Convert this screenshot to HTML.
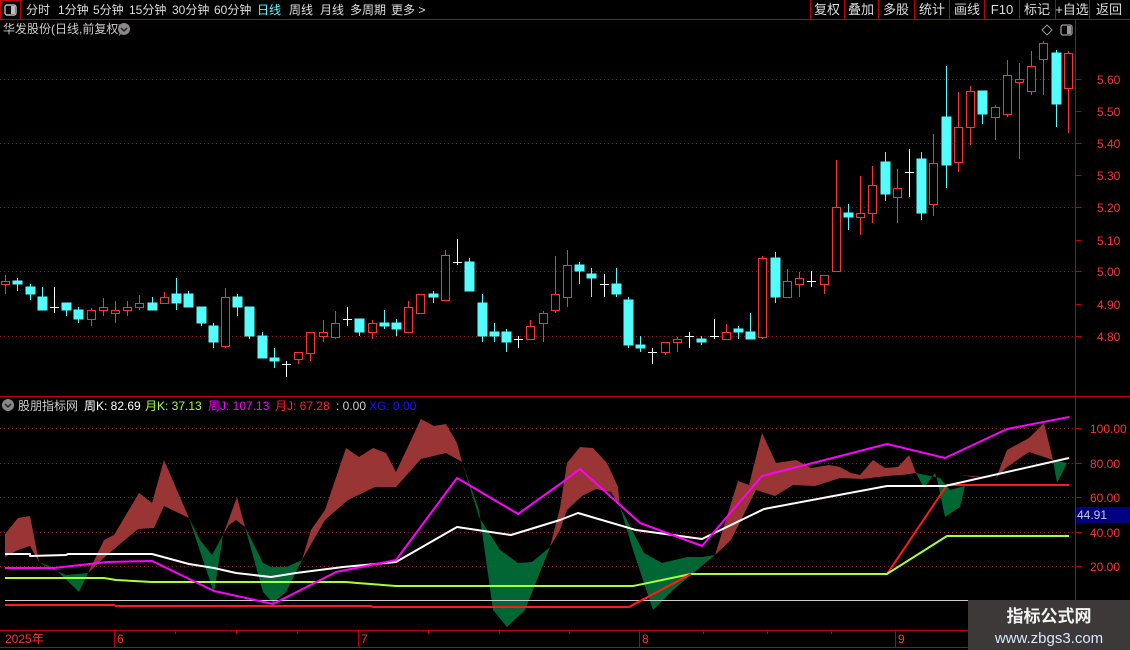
<!DOCTYPE html>
<html><head><meta charset="utf-8"><style>
html,body{margin:0;padding:0;background:#000;width:1130px;height:650px;overflow:hidden;font-family:"Liberation Sans","Noto Sans CJK SC",sans-serif}
svg{position:absolute;left:0;top:0}
</style></head><body>
<svg width="1130" height="650" viewBox="0 0 1130 650" xmlns="http://www.w3.org/2000/svg" font-family="Liberation Sans, Noto Sans CJK SC, sans-serif">
<rect width="1130" height="650" fill="#000"/>
<!-- top bar -->
<line x1="0" y1="19.5" x2="1130" y2="19.5" stroke="#c00000"/>
<rect x="0.5" y="0.5" width="20" height="19" fill="none" stroke="#c00000"/>
<rect x="5" y="5" width="11" height="10" rx="2" fill="none" stroke="#bbb" stroke-width="1.4"/>
<rect x="11" y="6" width="4" height="8" fill="#bbb"/>
<g font-size="12" fill="#ddd">
<text x="26" y="14">分时</text><text x="58" y="14">1分钟</text><text x="93" y="14">5分钟</text><text x="129" y="14">15分钟</text><text x="172" y="14">30分钟</text><text x="214" y="14">60分钟</text><text x="257" y="14" fill="#54fcfc">日线</text><text x="289" y="14">周线</text><text x="320" y="14">月线</text><text x="350" y="14">多周期</text><text x="391" y="14">更多 &gt;</text>
</g>
<g stroke="#c00000"><line x1="810.5" y1="0" x2="810.5" y2="19"/><line x1="844.5" y1="0" x2="844.5" y2="19"/><line x1="878.5" y1="0" x2="878.5" y2="19"/><line x1="914.5" y1="0" x2="914.5" y2="19"/><line x1="949.5" y1="0" x2="949.5" y2="19"/><line x1="984.5" y1="0" x2="984.5" y2="19"/><line x1="1019.5" y1="0" x2="1019.5" y2="19"/><line x1="1055.5" y1="0" x2="1055.5" y2="19"/><line x1="1089.5" y1="0" x2="1089.5" y2="19"/></g>
<g font-size="13" fill="#ddd" text-anchor="middle">
<text x="827" y="14">复权</text><text x="861" y="14">叠加</text><text x="896" y="14">多股</text><text x="932" y="14">统计</text><text x="967" y="14">画线</text><text x="1002" y="14">F10</text><text x="1037" y="14">标记</text><text x="1072" y="14">+自选</text><text x="1109" y="14">返回</text>
</g>
<!-- title -->
<text x="3" y="33" font-size="12" fill="#ccc">华发股份(日线,前复权)</text>
<circle cx="124" cy="29" r="6" fill="#888"/><path d="M121 28 L124 31 L127 28" stroke="#222" stroke-width="1.5" fill="none"/>
<path d="M1047 25 L1052 30 L1047 35 L1042 30 Z" fill="none" stroke="#999"/>
<rect x="1061" y="25" width="11" height="10" rx="2" fill="none" stroke="#999" stroke-width="1.3"/><rect x="1067" y="26" width="4" height="8" fill="#999"/>
<!-- axis lines -->
<line x1="1075.5" y1="20" x2="1075.5" y2="630" stroke="#c00000"/>
<line x1="0" y1="396.5" x2="1130" y2="396.5" stroke="#c00000"/>
<!-- price grid -->
<g stroke="#8a1a1a" stroke-dasharray="1,3"><line x1="0" y1="79.5" x2="1075" y2="79.5"/><line x1="0" y1="143.5" x2="1075" y2="143.5"/><line x1="0" y1="207.5" x2="1075" y2="207.5"/><line x1="0" y1="271.5" x2="1075" y2="271.5"/><line x1="0" y1="336.5" x2="1075" y2="336.5"/></g>
<g stroke="#c00000"><line x1="1075" y1="79.5" x2="1081" y2="79.5"/><line x1="1075" y1="111.5" x2="1081" y2="111.5"/><line x1="1075" y1="143.5" x2="1081" y2="143.5"/><line x1="1075" y1="175.5" x2="1081" y2="175.5"/><line x1="1075" y1="207.5" x2="1081" y2="207.5"/><line x1="1075" y1="240.5" x2="1081" y2="240.5"/><line x1="1075" y1="271.5" x2="1081" y2="271.5"/><line x1="1075" y1="304.5" x2="1081" y2="304.5"/><line x1="1075" y1="336.5" x2="1081" y2="336.5"/></g>
<g font-size="12" fill="#ff3232"><text x="1097" y="84">5.60</text><text x="1097" y="116">5.50</text><text x="1097" y="148">5.40</text><text x="1097" y="180">5.30</text><text x="1097" y="212">5.20</text><text x="1097" y="245">5.10</text><text x="1097" y="276">5.00</text><text x="1097" y="309">4.90</text><text x="1097" y="341">4.80</text></g>
<g stroke-width="1" shape-rendering="crispEdges">
<g stroke="#ff3232" fill="#000">
<line x1="5.5" y1="275" x2="5.5" y2="294"/><rect x="1.5" y="281.5" width="8" height="3"/>
<line x1="91.5" y1="308" x2="91.5" y2="326"/><rect x="87.5" y="310.5" width="8" height="9"/>
<line x1="103.5" y1="298" x2="103.5" y2="316"/><rect x="99.5" y="307.5" width="8" height="3"/>
<line x1="115.5" y1="301" x2="115.5" y2="323"/><rect x="111.5" y="310.5" width="8" height="3"/>
<line x1="127.5" y1="301" x2="127.5" y2="316"/><rect x="123.5" y="307.5" width="8" height="3"/>
<line x1="139.5" y1="295" x2="139.5" y2="310"/><rect x="135.5" y="303.5" width="8" height="4"/>
<line x1="164.5" y1="292" x2="164.5" y2="303"/><rect x="160.5" y="297.5" width="8" height="6"/>
<line x1="225.5" y1="288" x2="225.5" y2="348"/><rect x="221.5" y="297.5" width="8" height="49"/>
<line x1="298.5" y1="352" x2="298.5" y2="364"/><rect x="294.5" y="352.5" width="8" height="7"/>
<line x1="310.5" y1="332" x2="310.5" y2="361"/><rect x="306.5" y="332.5" width="8" height="21"/>
<line x1="323.5" y1="320" x2="323.5" y2="342"/><rect x="319.5" y="332.5" width="8" height="4"/>
<line x1="335.5" y1="311" x2="335.5" y2="339"/><rect x="331.5" y="323.5" width="8" height="14"/>
<line x1="372.5" y1="320" x2="372.5" y2="339"/><rect x="368.5" y="323.5" width="8" height="9"/>
<line x1="408.5" y1="301" x2="408.5" y2="332"/><rect x="404.5" y="307.5" width="8" height="25"/>
<rect x="416.5" y="294.5" width="8" height="19"/>
<line x1="445.5" y1="250" x2="445.5" y2="300"/><rect x="441.5" y="255.5" width="8" height="45"/>
<line x1="530.5" y1="320" x2="530.5" y2="339"/><rect x="526.5" y="326.5" width="8" height="13"/>
<line x1="543.5" y1="311" x2="543.5" y2="342"/><rect x="539.5" y="313.5" width="8" height="10"/>
<line x1="555.5" y1="256" x2="555.5" y2="313"/><rect x="551.5" y="294.5" width="8" height="16"/>
<line x1="567.5" y1="250" x2="567.5" y2="307"/><rect x="563.5" y="265.5" width="8" height="32"/>
<line x1="665.5" y1="342" x2="665.5" y2="355"/><rect x="661.5" y="342.5" width="8" height="10"/>
<line x1="677.5" y1="337" x2="677.5" y2="352"/><rect x="673.5" y="339.5" width="8" height="3"/>
<line x1="726.5" y1="324" x2="726.5" y2="339"/><rect x="722.5" y="332.5" width="8" height="7"/>
<line x1="762.5" y1="256" x2="762.5" y2="339"/><rect x="758.5" y="258.5" width="8" height="79"/>
<line x1="787.5" y1="269" x2="787.5" y2="297"/><rect x="783.5" y="281.5" width="8" height="16"/>
<line x1="799.5" y1="272" x2="799.5" y2="297"/><rect x="795.5" y="278.5" width="8" height="6"/>
<line x1="824.5" y1="275" x2="824.5" y2="294"/><rect x="820.5" y="275.5" width="8" height="9"/>
<line x1="836.5" y1="160" x2="836.5" y2="271"/><rect x="832.5" y="207.5" width="8" height="64"/>
<line x1="860.5" y1="176" x2="860.5" y2="235"/><rect x="856.5" y="213.5" width="8" height="4"/>
<line x1="872.5" y1="166" x2="872.5" y2="223"/><rect x="868.5" y="185.5" width="8" height="28"/>
<line x1="897.5" y1="169" x2="897.5" y2="223"/><rect x="893.5" y="188.5" width="8" height="9"/>
<line x1="933.5" y1="134" x2="933.5" y2="216"/><rect x="929.5" y="163.5" width="8" height="41"/>
<line x1="958.5" y1="92" x2="958.5" y2="172"/><rect x="954.5" y="127.5" width="8" height="35"/>
<line x1="970.5" y1="86" x2="970.5" y2="145"/><rect x="966.5" y="91.5" width="8" height="36"/>
<line x1="995.5" y1="105" x2="995.5" y2="140"/><rect x="991.5" y="107.5" width="8" height="10"/>
<line x1="1007.5" y1="60" x2="1007.5" y2="117"/><rect x="1003.5" y="75.5" width="8" height="39"/>
<line x1="1019.5" y1="63" x2="1019.5" y2="159"/><rect x="1015.5" y="79.5" width="8" height="3"/>
<line x1="1031.5" y1="51" x2="1031.5" y2="95"/><rect x="1027.5" y="66.5" width="8" height="25"/>
<line x1="1043.5" y1="41" x2="1043.5" y2="95"/><rect x="1039.5" y="43.5" width="8" height="16"/>
<line x1="1068.5" y1="51" x2="1068.5" y2="133"/><rect x="1064.5" y="53.5" width="8" height="35"/>
</g>
<g stroke="#54fcfc" fill="#54fcfc">
<line x1="17.5" y1="278" x2="17.5" y2="291"/><rect x="13" y="281" width="9" height="3"/>
<line x1="30.5" y1="284" x2="30.5" y2="300"/><rect x="26" y="287" width="9" height="7"/>
<line x1="42.5" y1="287" x2="42.5" y2="310"/><rect x="38" y="297" width="9" height="13"/>
<line x1="66.5" y1="303" x2="66.5" y2="316"/><rect x="62" y="303" width="9" height="7"/>
<line x1="78.5" y1="307" x2="78.5" y2="323"/><rect x="74" y="310" width="9" height="9"/>
<line x1="152.5" y1="297" x2="152.5" y2="310"/><rect x="148" y="303" width="9" height="7"/>
<line x1="176.5" y1="278" x2="176.5" y2="310"/><rect x="172" y="294" width="9" height="9"/>
<line x1="188.5" y1="291" x2="188.5" y2="307"/><rect x="184" y="294" width="9" height="13"/>
<line x1="201.5" y1="307" x2="201.5" y2="326"/><rect x="197" y="307" width="9" height="16"/>
<line x1="213.5" y1="323" x2="213.5" y2="348"/><rect x="209" y="326" width="9" height="16"/>
<line x1="237.5" y1="294" x2="237.5" y2="316"/><rect x="233" y="297" width="9" height="10"/>
<line x1="249.5" y1="307" x2="249.5" y2="339"/><rect x="245" y="307" width="9" height="29"/>
<line x1="262.5" y1="332" x2="262.5" y2="358"/><rect x="258" y="336" width="9" height="22"/>
<line x1="274.5" y1="348" x2="274.5" y2="368"/><rect x="270" y="358" width="9" height="3"/>
<line x1="359.5" y1="319" x2="359.5" y2="336"/><rect x="355" y="319" width="9" height="13"/>
<line x1="384.5" y1="310" x2="384.5" y2="329"/><rect x="380" y="323" width="9" height="3"/>
<line x1="396.5" y1="319" x2="396.5" y2="336"/><rect x="392" y="323" width="9" height="6"/>
<line x1="433.5" y1="291" x2="433.5" y2="303"/><rect x="429" y="294" width="9" height="3"/>
<line x1="469.5" y1="258" x2="469.5" y2="291"/><rect x="465" y="262" width="9" height="29"/>
<line x1="482.5" y1="294" x2="482.5" y2="342"/><rect x="478" y="303" width="9" height="33"/>
<line x1="494.5" y1="323" x2="494.5" y2="342"/><rect x="490" y="332" width="9" height="4"/>
<line x1="506.5" y1="329" x2="506.5" y2="352"/><rect x="502" y="332" width="9" height="10"/>
<line x1="579.5" y1="262" x2="579.5" y2="284"/><rect x="575" y="265" width="9" height="6"/>
<line x1="591.5" y1="268" x2="591.5" y2="297"/><rect x="587" y="274" width="9" height="4"/>
<line x1="616.5" y1="268" x2="616.5" y2="297"/><rect x="612" y="284" width="9" height="10"/>
<line x1="628.5" y1="297" x2="628.5" y2="348"/><rect x="624" y="300" width="9" height="45"/>
<line x1="640.5" y1="336" x2="640.5" y2="352"/><rect x="636" y="345" width="9" height="3"/>
<line x1="701.5" y1="336" x2="701.5" y2="345"/><rect x="697" y="339" width="9" height="3"/>
<line x1="738.5" y1="326" x2="738.5" y2="339"/><rect x="734" y="329" width="9" height="3"/>
<line x1="750.5" y1="313" x2="750.5" y2="339"/><rect x="746" y="332" width="9" height="7"/>
<line x1="775.5" y1="252" x2="775.5" y2="303"/><rect x="771" y="258" width="9" height="39"/>
<line x1="848.5" y1="204" x2="848.5" y2="230"/><rect x="844" y="213" width="9" height="4"/>
<line x1="885.5" y1="152" x2="885.5" y2="201"/><rect x="881" y="162" width="9" height="32"/>
<line x1="921.5" y1="152" x2="921.5" y2="220"/><rect x="917" y="159" width="9" height="54"/>
<line x1="946.5" y1="66" x2="946.5" y2="188"/><rect x="942" y="117" width="9" height="48"/>
<line x1="982.5" y1="91" x2="982.5" y2="124"/><rect x="978" y="91" width="9" height="23"/>
<line x1="1056.5" y1="50" x2="1056.5" y2="127"/><rect x="1052" y="53" width="9" height="51"/>
</g>
<g stroke="#fff">
<line x1="54.5" y1="287" x2="54.5" y2="313"/><line x1="50" y1="307.5" x2="59" y2="307.5"/>
<line x1="286.5" y1="361" x2="286.5" y2="377"/><line x1="282" y1="364.5" x2="291" y2="364.5"/>
<line x1="347.5" y1="307" x2="347.5" y2="326"/><line x1="343" y1="319.5" x2="352" y2="319.5"/>
<line x1="457.5" y1="239" x2="457.5" y2="265"/><line x1="453" y1="262.5" x2="462" y2="262.5"/>
<line x1="518.5" y1="336" x2="518.5" y2="348"/><line x1="514" y1="339.5" x2="523" y2="339.5"/>
<line x1="604.5" y1="274" x2="604.5" y2="297"/><line x1="600" y1="284.5" x2="609" y2="284.5"/>
<line x1="652.5" y1="348" x2="652.5" y2="364"/><line x1="648" y1="352.5" x2="657" y2="352.5"/>
<line x1="689.5" y1="332" x2="689.5" y2="348"/><line x1="685" y1="336.5" x2="694" y2="336.5"/>
<line x1="714.5" y1="319" x2="714.5" y2="339"/><line x1="710" y1="336.5" x2="719" y2="336.5"/>
<line x1="811.5" y1="271" x2="811.5" y2="287"/><line x1="807" y1="281.5" x2="816" y2="281.5"/>
<line x1="909.5" y1="149" x2="909.5" y2="197"/><line x1="905" y1="172.5" x2="914" y2="172.5"/>
</g>
</g>
<!-- indicator legend -->
<circle cx="8" cy="405" r="6" fill="#888"/><path d="M5 404 L8 407 L11 404" stroke="#222" stroke-width="1.5" fill="none"/>
<g font-size="12"><text x="18" y="410" fill="#ccc">股朋指标网</text><text x="84" y="410" fill="#fff">周K: 82.69</text><text x="145" y="410" fill="#a6ff3a">月K: 37.13</text><text x="208" y="410" fill="#ff00ff">周J: 107.13</text><text x="275" y="410" fill="#ff2020">月J: 67.28</text><text x="336" y="410" fill="#ccc">: 0.00</text><text x="369" y="410" fill="#1515ff">XG: 0.00</text></g>
<g stroke="#8a1a1a" stroke-dasharray="1,3"><line x1="0" y1="428.5" x2="1075" y2="428.5"/><line x1="0" y1="463.5" x2="1075" y2="463.5"/><line x1="0" y1="497.5" x2="1075" y2="497.5"/><line x1="0" y1="532.5" x2="1075" y2="532.5"/><line x1="0" y1="566.5" x2="1075" y2="566.5"/></g>
<g stroke="#c00000"><line x1="1075" y1="428.5" x2="1081" y2="428.5"/><line x1="1075" y1="463.5" x2="1081" y2="463.5"/><line x1="1075" y1="497.5" x2="1081" y2="497.5"/><line x1="1075" y1="532.5" x2="1081" y2="532.5"/><line x1="1075" y1="566.5" x2="1081" y2="566.5"/></g>
<g font-size="12" fill="#ff3232"><text x="1090" y="433">100.00</text><text x="1090" y="468">80.00</text><text x="1090" y="502">60.00</text><text x="1090" y="537">40.00</text><text x="1090" y="571">20.00</text></g>
<rect x="1076" y="507" width="54" height="16" fill="#000080"/><text x="1077" y="519" font-size="12" fill="#ccc">44.91</text>
<g fill="#993535">
<polygon points="5,534 18,518 30,516 39,562 30,546 18,550 5,557"/>
<polygon points="88,573 104,540 114,535 139,493 152,503 164,460 189,518 164,506 154,528 138,529 107,555"/>
<polygon points="223,535 237,497 245,527 236,520 229,525"/>
<polygon points="302,560 311,530 325,510 346,448 359,457 373,448 386,453 396,472 421,419 434,426 446,424 457,443 462,462 446,453 421,459 396,487 375,487 348,500 325,520"/>
<polygon points="550,547 560,508 567,463 580,447 593,448 607,463 618,487 620,507 611,492 596,489 582,496 567,510 560,530"/>
<polygon points="715,555 738,481 749,485 762,433 776,463 796,460 811,468 829,465 840,467 851,473 860,475 873,460 885,468 898,467 909,455 916,473 902,475 887,476 862,479 840,478 815,486 793,485 775,496 756,490 742,518 731,540"/>
<polygon points="960,475 973,477 996,478 1007,450 1029,438 1044,423 1053,460 1029,452 1007,467 996,478"/>
</g>
<g fill="#006633">
<polygon points="39,562 54,568 79,592 88,573 66,575 45,566"/>
<polygon points="189,518 200,540 212,555 223,535 214,593"/>
<polygon points="245,527 263,563 271,567 286,567 302,560 286,592 273,603 263,592"/>
<polygon points="462,462 479,510 493,610 507,627 525,610 550,547 532,562 518,563 500,550 479,517"/>
<polygon points="620,507 633,550 653,610 673,590 715,555 702,557 687,557 662,563 644,553"/>
<polygon points="916,473 924,488 935,473 937,479 945,517 960,507 965,486 950,490 940,478"/>
<polygon points="1053,460 1057,483 1067,463"/>
</g>
<line x1="5" y1="600.5" x2="1075" y2="600.5" stroke="#ccc"/>
<g fill="none" stroke-width="2" stroke-linejoin="round">
<polyline stroke="#ff1a1a" points="5,605 114,605 116,606 371,606 373,607 629,607 691,574 887,574 947,485 1069,485"/>
<polyline stroke="#a6ff3a" points="5,578 104,578 116,580 152,582 346,582 357,583 396,586 633,586 691,574 887,574 947,536 1069,536"/>
<polyline stroke="#ff1a1a" points="629,607 691,574"/>
<polyline stroke="#fff" points="5,554 30,554 30,556 66,555 68,554 152,554 189,564 214,568 236,573 271,577 296,573 343,567 396,562 457,527 511,535 560,520 578,513 636,530 702,539 764,509 887,486 945,486 1069,458"/>
<polyline stroke="#ff00ff" points="5,568 54,568 107,562 152,561 214,591 273,604 336,572 396,560 457,478 518,514 560,484 580,469 640,523 702,546 762,476 887,444 945,458 1007,429 1069,417"/>
</g>
<line x1="0" y1="630.5" x2="1075" y2="630.5" stroke="#c00000"/>
<line x1="0" y1="647.5" x2="1130" y2="647.5" stroke="#c00000"/>
<g stroke="#c00000"><line x1="114.5" y1="630" x2="114.5" y2="647"/><line x1="358.5" y1="630" x2="358.5" y2="647"/><line x1="639.5" y1="630" x2="639.5" y2="647"/><line x1="895.5" y1="630" x2="895.5" y2="647"/>
<line x1="175.5" y1="630" x2="175.5" y2="634"/><line x1="236.5" y1="630" x2="236.5" y2="634"/><line x1="297.5" y1="630" x2="297.5" y2="634"/><line x1="428.5" y1="630" x2="428.5" y2="634"/><line x1="499.5" y1="630" x2="499.5" y2="634"/><line x1="569.5" y1="630" x2="569.5" y2="634"/><line x1="703.5" y1="630" x2="703.5" y2="634"/><line x1="767.5" y1="630" x2="767.5" y2="634"/><line x1="831.5" y1="630" x2="831.5" y2="634"/></g>
<g font-size="12" fill="#ff3232"><text x="5" y="643">2025年</text><text x="117" y="643">6</text><text x="361" y="643">7</text><text x="642" y="643">8</text><text x="898" y="643">9</text></g>
<rect x="968" y="600" width="162" height="50" fill="#3d3939"/>
<text x="1049" y="622" font-size="17" font-weight="bold" fill="#f2f2f2" text-anchor="middle">指标公式网</text>
<text x="1049" y="643" font-size="15" fill="#d8e8ff" text-anchor="middle">www.zbgs3.com</text>
</svg>
</body></html>
